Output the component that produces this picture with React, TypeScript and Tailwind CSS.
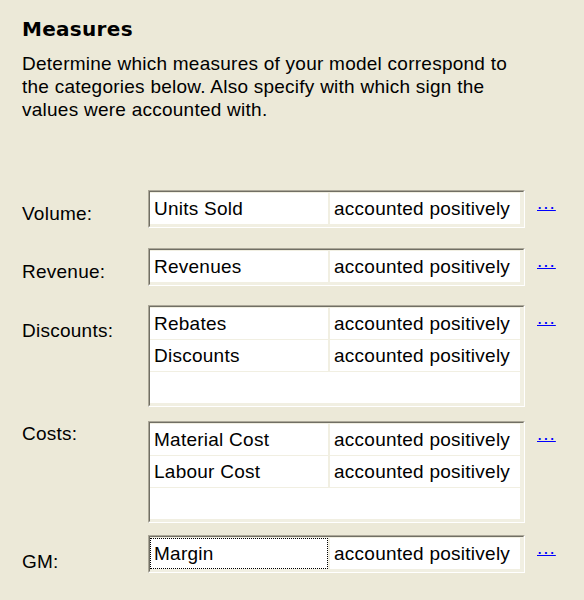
import React from 'react';

type Row = { name: string; sign: string };

type Group = {
  label: string;
  rows: Row[];
  slots: number;
  labelPad: string;
  top: string;
  focused?: boolean;
};

const groups: Group[] = [
  { label: 'Volume:', rows: [{ name: 'Units Sold', sign: 'accounted positively' }], slots: 1, labelPad: 'pt-[13px]', top: 'mt-[69px]' },
  { label: 'Revenue:', rows: [{ name: 'Revenues', sign: 'accounted positively' }], slots: 1, labelPad: 'pt-[13px]', top: 'mt-[20px]' },
  {
    label: 'Discounts:',
    rows: [
      { name: 'Rebates', sign: 'accounted positively' },
      { name: 'Discounts', sign: 'accounted positively' },
    ],
    slots: 3,
    labelPad: 'pt-[15px]',
    top: 'mt-[19px]',
  },
  {
    label: 'Costs:',
    rows: [
      { name: 'Material Cost', sign: 'accounted positively' },
      { name: 'Labour Cost', sign: 'accounted positively' },
    ],
    slots: 3,
    labelPad: 'pt-[2px]',
    top: 'mt-[14px]',
  },
  { label: 'GM:', rows: [{ name: 'Margin', sign: 'accounted positively' }], slots: 1, labelPad: 'pt-[16px]', top: 'mt-[12px]', focused: true },
];

function MeasureBox({ group }: { group: Group }) {
  const empty = group.slots - group.rows.length;
  return (
    <div className="w-[377px] border-l border-t border-l-[#aca899] border-t-[#aca899] border-r border-b border-r-white border-b-white">
      <div className="border-l border-t border-l-[#716f64] border-t-[#716f64] border-r border-b border-r-[#f1efe2] border-b-[#f1efe2] bg-[#f1efe2]">
        <div className="flex flex-col gap-[1px] pt-[1px] pr-[3px] pb-[2px]">
          {group.rows.map((r) => (
            <div key={r.name} className="flex h-[31px] gap-[2px]">
              <div
                className={
                  group.focused
                    ? 'w-[178px] bg-white flex items-center pl-[3px] border border-dotted border-black'
                    : 'w-[178px] bg-white flex items-center pl-[4px]'
                }
              >
                {r.name}
              </div>
              <div className="flex-1 bg-white flex items-center pl-[4px]">{r.sign}</div>
            </div>
          ))}
          {empty > 0 && <div className="h-[31px] bg-white" />}
        </div>
      </div>
    </div>
  );
}

export default function App() {
  return (
    <div
      className="w-[584px] h-[600px] bg-[#ece9d8] text-black px-[22px] pt-[16px] overflow-hidden tracking-[0.25px]"
      style={{ fontFamily: '"Liberation Sans", Arial, sans-serif' }}
    >
      <h2
        className="text-[20px] font-bold leading-[26px] tracking-[0.3px]"
        style={{ fontFamily: '"DejaVu Sans", Verdana, sans-serif' }}
      >
        Measures
      </h2>
      <p className="mt-[10px] text-[19px] leading-[23px] w-[500px]">
        Determine which measures of your model correspond to the categories below. Also specify with which sign the values were accounted with.
      </p>

      <div className="text-[19px] leading-[22px]">
        {groups.map((g) => (
          <div key={g.label} className={`flex ${g.top}`}>
            <div className={`w-[126px] shrink-0 ${g.labelPad}`}>{g.label}</div>
            <MeasureBox group={g} />
            <a className="ml-[12px] pt-[2px] text-[#0000ff] underline text-[19px] leading-[22px] tracking-[1px]">...</a>
          </div>
        ))}
      </div>
    </div>
  );
}
